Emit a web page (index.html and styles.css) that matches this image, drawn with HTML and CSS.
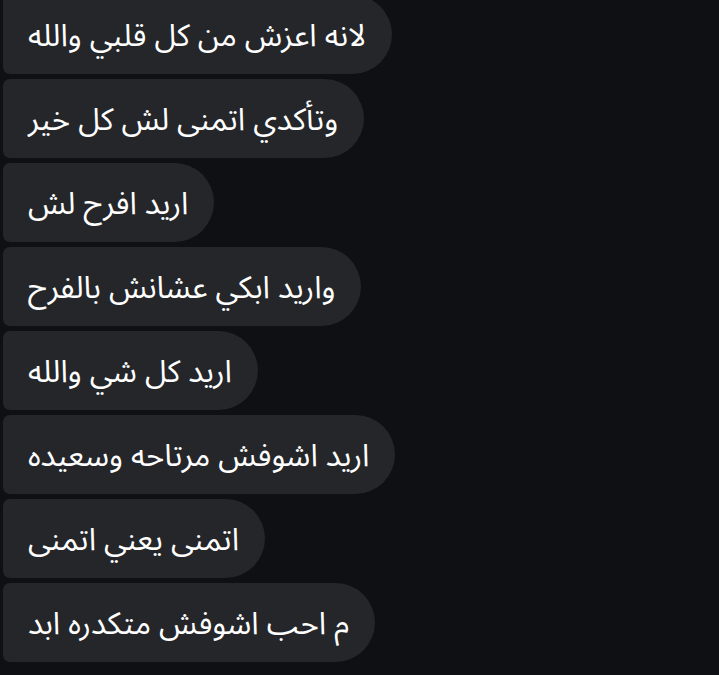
FILE: index.html
```html
<!DOCTYPE html>
<html lang="ar">
<head>
<meta charset="utf-8">
<link rel="stylesheet" href="styles.css">
</head>
<body>
<div class="chat">
  <div class="bubble" dir="rtl">لانه اعزش من كل قلبي والله</div>
  <div class="bubble" dir="rtl">وتأكدي اتمنى لش كل خير</div>
  <div class="bubble" dir="rtl">اريد افرح لش</div>
  <div class="bubble" dir="rtl">واريد ابكي عشانش بالفرح</div>
  <div class="bubble" dir="rtl">اريد كل شي والله</div>
  <div class="bubble" dir="rtl">اريد اشوفش مرتاحه وسعيده</div>
  <div class="bubble" dir="rtl">اتمنى يعني اتمنى</div>
  <div class="bubble" dir="rtl">م احب اشوفش متكدره ابد</div>
</div>
</body>
</html>
```
FILE: styles.css
```css
html, body {
  margin: 0;
  padding: 0;
  background: #0e1014;
  height: 100%;
  overflow: hidden;
}
.chat {
  display: flex;
  flex-direction: column;
  align-items: flex-start;
  gap: 5px;
  padding-left: 3px;
  margin-top: -5px;
}
.bubble {
  box-sizing: border-box;
  height: 79px;
  display: flex;
  align-items: center;
  padding: 2px 26px 0 25px;
  background: #242629;
  color: #ffffff;
  font-family: "Noto Sans Arabic", "Noto Sans", sans-serif;
  font-size: 31px;
  border-radius: 7px 40px 40px 7px;
  white-space: nowrap;
}
```
